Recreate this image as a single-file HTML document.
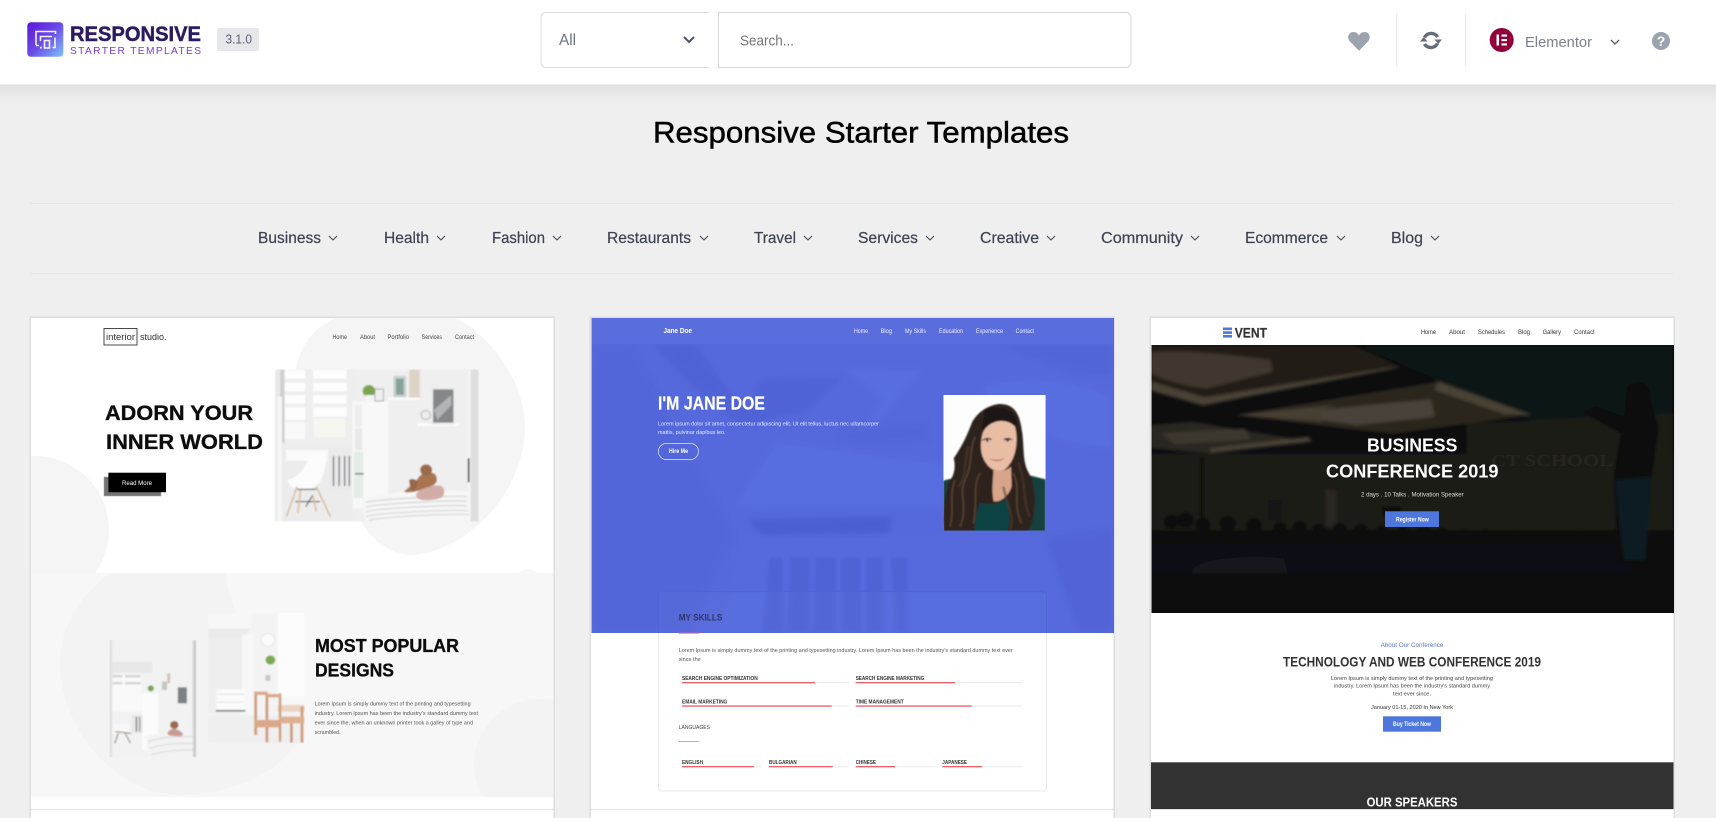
<!DOCTYPE html>
<html lang="en"><head><meta charset="utf-8"><title>Responsive Starter Templates</title>
<style>
html,body{margin:0;padding:0;width:1716px;height:818px;overflow:hidden;background:#efeff0}
svg{display:block;position:absolute;left:0;top:0}
text{font-family:"Liberation Sans",Arial,sans-serif}
.nav{font-size:16px;fill:#3c4350;stroke:#3c4350;stroke-width:.2}
.chev{fill:none;stroke:#454b57;stroke-width:1.1}
.b{font-weight:700}
</style></head><body>
<svg width="1716" height="818" viewBox="0 0 1716 818" xmlns="http://www.w3.org/2000/svg">
<defs>
<linearGradient id="lg" x1="0" y1="0" x2="1" y2="1"><stop offset="0" stop-color="#5d14d8"/><stop offset=".5" stop-color="#6a4be6"/><stop offset="1" stop-color="#7fc3f9"/></linearGradient>
<linearGradient id="sh" x1="0" y1="0" x2="0" y2="1"><stop offset="0" stop-color="#e2e2e3"/><stop offset="1" stop-color="#efeff0"/></linearGradient>
<filter id="bl" x="-2%" y="-2%" width="104%" height="104%"><feGaussianBlur stdDeviation=".3"/></filter>
<filter id="bl3" x="-5%" y="-5%" width="110%" height="110%"><feGaussianBlur stdDeviation="2.2"/></filter>
<filter id="bl4" x="-5%" y="-5%" width="110%" height="110%"><feGaussianBlur stdDeviation="5"/></filter>
<filter id="bl5" x="-5%" y="-5%" width="110%" height="110%"><feGaussianBlur stdDeviation="10"/></filter>
<clipPath id="c1a"><rect x="31" y="318" width="522.5" height="255"/></clipPath>
<clipPath id="c1b"><rect x="31" y="573" width="522.5" height="224"/></clipPath>
<clipPath id="c2"><rect x="591.5" y="318" width="522.5" height="315"/></clipPath>
<clipPath id="c3"><rect x="1151.5" y="345" width="522.5" height="268"/></clipPath>
<clipPath id="skw"><rect x="650" y="633" width="410" height="170"/></clipPath>
<clipPath id="ph"><rect x="25" y="15" width="307" height="407"/></clipPath>
<clipPath id="room"><rect x="727" y="178" width="581" height="457"/></clipPath>
<clipPath id="rl"><rect x="255" y="240" width="248" height="352"/></clipPath>
<clipPath id="rr"><rect x="535" y="158" width="277" height="392"/></clipPath>
</defs>

<rect width="1716" height="818" fill="#efeff0"/>
<rect y="85" width="1716" height="20" fill="url(#sh)"/>
<!-- header -->
<rect width="1716" height="85" fill="#fff"/>
<rect y="84.5" width="1716" height="1" fill="#dcdcde"/>
<rect x="27.3" y="22.3" width="36" height="34.5" rx="3.5" fill="url(#lg)"/>
<g fill="none" stroke="#fff" stroke-width="1.6" opacity=".92">
<path d="M36 45V31.5H55.5V34"/><path d="M36 45.5H39"/><path d="M40.5 41V36.5H52"/><path d="M55 37.5V47.5H52.5"/><rect x="44.5" y="40.5" width="5" height="7.5"/>
</g>
<rect x="40" y="46.8" width="1.7" height="1.7" fill="#fff"/>
<text x="70" y="40.8" font-size="21" class="b" fill="#2e1b5f" stroke="#2e1b5f" stroke-width=".45" textLength="131" lengthAdjust="spacingAndGlyphs">RESPONSIVE</text>
<text x="70" y="54" font-size="10.2" fill="#7a3bd0" textLength="131" lengthAdjust="spacing">STARTER TEMPLATES</text>
<rect x="217" y="28" width="42" height="23" rx="2" fill="#e5e7eb"/>
<text x="225.5" y="43.5" font-size="13" fill="#5b6270" textLength="26.5" lengthAdjust="spacingAndGlyphs">3.1.0</text>

<path d="M709 12.5H546a5 5 0 0 0-5 5V62.5a5 5 0 0 0 5 5H709" fill="#fff" stroke="#dcdcde" stroke-width="1"/>
<text x="559" y="45" font-size="16" fill="#6b7280" textLength="17" lengthAdjust="spacingAndGlyphs">All</text>
<path d="M684 37l5 5 5-5" fill="none" stroke="#4b5563" stroke-width="2"/>
<path d="M718.5 12.5H1126a5 5 0 0 1 5 5V62.5a5 5 0 0 1-5 5H718.5Z" fill="#fff" stroke="#d6d6d8" stroke-width="1"/>
<text x="740" y="45.5" font-size="15" fill="#757575" textLength="54" lengthAdjust="spacingAndGlyphs">Search...</text>

<path d="M1359 50.7L1350 41.5C1346.5 37.5 1348.5 32 1353.5 32C1356 32 1358 33.5 1359 35.5C1360 33.5 1362 32 1364.5 32C1369.5 32 1371.5 37.5 1368 41.5Z" fill="#9ca3af"/>
<rect x="1396" y="14" width="1" height="52" fill="#e5e7eb"/>
<g fill="none" stroke="#666c78" stroke-width="3.4"><path d="M1424.5 37.5A7.5 7.5 0 0 1 1437.5 37"/><path d="M1437.5 43.5A7.5 7.5 0 0 1 1424.5 44"/></g>
<path d="M1434.5 39.5H1442L1438.2 44ZM1420 41.5H1427.5L1423.8 37Z" fill="#666c78"/>
<rect x="1465" y="14" width="1" height="52" fill="#e5e7eb"/>
<circle cx="1501.7" cy="40" r="12" fill="#92003b"/>
<path d="M1496.5 34.5h2.5v11h-2.5zM1501.5 34.5h5.5v2.1h-5.5zM1501.5 39h5.5v2.1h-5.5zM1501.5 43.4h5.5v2.1h-5.5z" fill="#fff"/>
<text x="1525" y="47" font-size="15" fill="#7b818c" textLength="67" lengthAdjust="spacingAndGlyphs">Elementor</text>
<path d="M1611 40l4 4 4-4" fill="none" stroke="#555c68" stroke-width="1.3"/>
<circle cx="1661" cy="41" r="9" fill="#9ca3af"/>
<text x="1661" y="46" font-size="14" class="b" fill="#fff" text-anchor="middle">?</text>

<!-- title + category nav -->
<text x="653" y="142.7" font-size="29.5" fill="#000" stroke="#000" stroke-width=".5" textLength="416" lengthAdjust="spacingAndGlyphs">Responsive Starter Templates</text>
<rect x="30" y="203" width="1643" height="1" fill="#e5e5e7"/>
<rect x="30" y="273" width="1643" height="1" fill="#e5e5e7"/>
<text x="258" y="243" class="nav" textLength="63" lengthAdjust="spacingAndGlyphs">Business</text><path class="chev" d="M329 236l4 4 4-4"/>
<text x="384" y="243" class="nav" textLength="45" lengthAdjust="spacingAndGlyphs">Health</text><path class="chev" d="M437 236l4 4 4-4"/>
<text x="492" y="243" class="nav" textLength="53" lengthAdjust="spacingAndGlyphs">Fashion</text><path class="chev" d="M553 236l4 4 4-4"/>
<text x="607" y="243" class="nav" textLength="84" lengthAdjust="spacingAndGlyphs">Restaurants</text><path class="chev" d="M700 236l4 4 4-4"/>
<text x="754" y="243" class="nav" textLength="42" lengthAdjust="spacingAndGlyphs">Travel</text><path class="chev" d="M804 236l4 4 4-4"/>
<text x="858" y="243" class="nav" textLength="60" lengthAdjust="spacingAndGlyphs">Services</text><path class="chev" d="M926 236l4 4 4-4"/>
<text x="980" y="243" class="nav" textLength="59" lengthAdjust="spacingAndGlyphs">Creative</text><path class="chev" d="M1047 236l4 4 4-4"/>
<text x="1101" y="243" class="nav" textLength="82" lengthAdjust="spacingAndGlyphs">Community</text><path class="chev" d="M1191 236l4 4 4-4"/>
<text x="1245" y="243" class="nav" textLength="83" lengthAdjust="spacingAndGlyphs">Ecommerce</text><path class="chev" d="M1337 236l4 4 4-4"/>
<text x="1391" y="243" class="nav" textLength="32" lengthAdjust="spacingAndGlyphs">Blog</text><path class="chev" d="M1431 236l4 4 4-4"/>

<!-- card frames -->
<g fill="#fff" stroke="#dedee2" stroke-width="1.5">
<rect x="30.25" y="317.25" width="524" height="520"/>
<rect x="590.25" y="317.25" width="524" height="520"/>
<rect x="1150.25" y="317.25" width="524" height="520"/>
</g>

<!-- CARD 1 -->
<g filter="url(#bl)">
<g clip-path="url(#c1a)">
<path d="M335 318C300 335 285 370 300 430C320 480 350 510 362 523C375 545 395 555 413 555C470 550 525 490 525 427C525 380 490 335 455 318Z" fill="#f5f5f6"/>
<circle cx="35" cy="530" r="74" fill="#f5f5f6"/>
</g>
<rect x="31" y="573" width="522.5" height="224" fill="#f7f7f8"/>
<g clip-path="url(#c1b)">
<path d="M110 573C75 600 60 630 60 665C62 735 120 795 180 795C235 795 280 770 295 745L300 700L240 620C230 600 227 585 225 573Z" fill="#f3f3f4"/>
<circle cx="540" cy="765" r="66" fill="#f3f3f4"/>
</g>
<circle cx="528" cy="582" r="13" fill="#f7f7f8" clip-path="url(#c1a)"/>
<rect x="104" y="328.5" width="33" height="16.5" fill="none" stroke="#333" stroke-width=".9"/>
<text x="106" y="340" font-size="9" fill="#333" textLength="29" lengthAdjust="spacingAndGlyphs">interior</text>
<text x="140" y="340" font-size="9" fill="#333" textLength="26.5" lengthAdjust="spacingAndGlyphs">studio.</text>
<g font-size="6" fill="#444">
<text x="332.5" y="339" textLength="14.5" lengthAdjust="spacingAndGlyphs">Home</text>
<text x="360" y="339" textLength="15" lengthAdjust="spacingAndGlyphs">About</text>
<text x="387.5" y="339" textLength="21.5" lengthAdjust="spacingAndGlyphs">Portfolio</text>
<text x="421.5" y="339" textLength="20.5" lengthAdjust="spacingAndGlyphs">Services</text>
<text x="455" y="339" textLength="19" lengthAdjust="spacingAndGlyphs">Contact</text>
</g>
<text x="105" y="420" font-size="21" class="b" fill="#0a0a0a" stroke="#0a0a0a" stroke-width=".3" textLength="148" lengthAdjust="spacingAndGlyphs">ADORN YOUR</text>
<text x="106" y="449" font-size="21" class="b" fill="#0a0a0a" stroke="#0a0a0a" stroke-width=".3" textLength="157" lengthAdjust="spacingAndGlyphs">INNER WORLD</text>
<rect x="104" y="477" width="57" height="19" fill="#737373" stroke="#a8a8a8" stroke-width=".6"/>
<rect x="108.4" y="472.7" width="57.6" height="19.5" fill="#000"/>
<text x="122" y="485" font-size="6.5" fill="#fff" textLength="30" lengthAdjust="spacingAndGlyphs">Read More</text>

<!-- room image (zoom coords) -->
<g transform="translate(20 310) scale(.3507 .3333)">
<g clip-path="url(#room)"><g filter="url(#bl3)">
<rect x="727" y="178" width="581" height="457" fill="#f0f0f1"/>
<rect x="727" y="178" width="30" height="457" fill="#e9e9ea"/>
<rect x="742" y="178" width="12" height="220" fill="#cfcfd1"/>
<rect x="755" y="178" width="195" height="230" fill="#eeeeef"/>
<g fill="#fdfdfd"><rect x="755" y="180" width="58" height="26"/><rect x="755" y="218" width="58" height="26"/><rect x="755" y="255" width="58" height="26"/><rect x="755" y="292" width="58" height="38"/><rect x="836" y="180" width="95" height="26"/><rect x="836" y="218" width="95" height="26"/><rect x="836" y="255" width="95" height="26"/><rect x="836" y="292" width="95" height="28"/><rect x="838" y="326" width="90" height="56" fill="#f5f6f0"/><rect x="755" y="336" width="58" height="52" fill="#f9f9f9"/></g>
<rect x="950" y="178" width="330" height="457" fill="#efeff0"/>
<rect x="735" y="405" width="215" height="230" fill="#ececed"/>
<rect x="758" y="420" width="120" height="32" fill="#fafafa"/>
<rect x="733" y="260" width="14" height="375" fill="#f6f6f6"/>
<path d="M830 430h45c-5 50-10 90-45 105c-25 10-60 5-68-25c30-5 55-40 68-80Z" fill="#fcfcfc"/>
<g stroke="#333" stroke-width="3" fill="none"><path d="M790 538h55M785 575h70M815 590l20-35"/></g>
<g stroke="#dcc0a2" stroke-width="5" fill="none"><path d="M790 530l-30 90M845 530l40 90M800 540l-8 70M835 555l10 50"/></g>
<rect x="880" y="422" width="65" height="118" rx="4" fill="#eaeaeb"/>
<g fill="#78787a"><rect x="892" y="438" width="4" height="90"/><rect x="908" y="438" width="4" height="90"/><rect x="924" y="438" width="4" height="90"/><rect x="937" y="438" width="4" height="90"/></g>
<rect x="948" y="275" width="102" height="320" fill="#f8f8f8"/>
<rect x="955" y="285" width="20" height="65" fill="#ececec"/><rect x="955" y="355" width="20" height="65" fill="#e8e8e8"/><rect x="952" y="425" width="26" height="140" fill="#e3ece6"/>
<rect x="955" y="490" width="25" height="3" fill="#333"/>
<circle cx="995" cy="243" r="18" fill="#7ba551"/><rect x="985" y="255" width="22" height="18" fill="#f4f4f4"/>
<rect x="1012" y="237" width="24" height="36" fill="none" stroke="#888" stroke-width="2"/>
<rect x="1050" y="262" width="90" height="8" fill="#fcfcfc"/>
<rect x="1065" y="198" width="36" height="64" fill="#c8d0cc"/><rect x="1072" y="206" width="22" height="48" fill="#86a29c"/>
<rect x="1110" y="178" width="30" height="85" fill="#ded4c6"/>
<rect x="1132" y="340" width="120" height="8" fill="#fcfcfc"/>
<rect x="1172" y="232" width="68" height="112" fill="#ececec"/><rect x="1178" y="238" width="58" height="100" fill="#85888a"/>
<path d="M1180 300l50-45v30l-40 45Z" fill="#b4b4b4"/>
<circle cx="1157" cy="315" r="16" fill="#cfcfcf"/><circle cx="1157" cy="315" r="10" fill="#f0f0f0"/>
<rect x="1277" y="178" width="31" height="457" fill="#dedede"/><rect x="1277" y="178" width="8" height="457" fill="#f5f5f5"/>
<rect x="1277" y="445" width="5" height="72" fill="#444"/>
<path d="M975 570c60-25 200-35 305-25v90H985Z" fill="#f6f6f6"/>
<g stroke="#d8d8d8" stroke-width="4" fill="none"><path d="M985 578c30-12 260-22 290-18M985 592c30-12 260-22 290-18M985 606c30-12 260-22 290-18M988 620c30-12 260-22 290-18M995 632c30-12 250-22 285-18"/></g>
<path d="M1135 505c5-15 40-25 50-10c8 15 3 25-8 32l-40 15c-15 5-40 8-42 2l25-22Z" fill="#a8744f"/>
<path d="M1110 510c5-5 20-5 25 10l-10 22c-8 3-15-10-15-32Z" fill="#95674a"/>
<circle cx="1158" cy="480" r="17" fill="#9a6a48"/>
<path d="M1130 552c10-18 40-24 62-26c15 0 22 13 15 32c-6 10-40 14-60 12c-12-2-20-9-17-18Z" fill="#d2aca6"/>
</g></g></g>

<text x="315" y="652" font-size="18.5" class="b" fill="#0a0a0a" stroke="#0a0a0a" stroke-width=".3" textLength="144" lengthAdjust="spacingAndGlyphs">MOST POPULAR</text>
<text x="315" y="676.3" font-size="18.5" class="b" fill="#0a0a0a" stroke="#0a0a0a" stroke-width=".3" textLength="79" lengthAdjust="spacingAndGlyphs">DESIGNS</text>
<g font-size="5.6" fill="#555">
<text x="314.6" y="705.3" textLength="156" lengthAdjust="spacingAndGlyphs">Lorem Ipsum is simply dummy text of the printing and typesetting</text>
<text x="314.6" y="715" textLength="163.4" lengthAdjust="spacingAndGlyphs">industry. Lorem Ipsum has been the industry's standard dummy text</text>
<text x="314.6" y="724.4" textLength="158.4" lengthAdjust="spacingAndGlyphs">ever since the, when an unknown printer took a galley of type and</text>
<text x="314.6" y="734" textLength="26" lengthAdjust="spacingAndGlyphs">scrambled.</text>
</g>
<g transform="translate(20 560) scale(.3507 .3333)">
<g clip-path="url(#rl)"><g filter="url(#bl3)">
<rect x="255" y="240" width="248" height="352" fill="#f2f2f3"/>
<rect x="262" y="305" width="115" height="35" fill="#e8e8e9"/>
<rect x="262" y="340" width="85" height="115" fill="#f9f9f9"/>
<g fill="#d2d2d4"><rect x="264" y="345" width="28" height="7"/><rect x="264" y="366" width="28" height="7"/><rect x="300" y="345" width="44" height="7"/><rect x="300" y="366" width="44" height="7"/></g>
<rect x="348" y="400" width="46" height="170" fill="#fbfbfb"/>
<rect x="255" y="240" width="8" height="352" fill="#e0e0e1"/>
<rect x="493" y="240" width="10" height="352" fill="#cdcdce"/>
<rect x="318" y="465" width="32" height="55" fill="#e8e8e8"/><rect x="330" y="470" width="4" height="45" fill="#777"/><rect x="340" y="470" width="3" height="45" fill="#777"/>
<path d="M265 490h45v30h-45Z" fill="#f7f7f7"/><path d="M272 515l45 5M280 520l-10 30M300 520l15 30" stroke="#857565" stroke-width="3" fill="none"/>
<circle cx="373" cy="385" r="9" fill="#7ba551"/>
<rect x="405" y="365" width="14" height="25" fill="#bfc6c2"/><rect x="420" y="340" width="8" height="30" fill="#d0c2b2"/>
<rect x="450" y="382" width="26" height="48" fill="#7e8185"/>
<path d="M360 530c40-15 100-20 133-14v76H365Z" fill="#f3f3f3"/>
<g stroke="#d6d6d6" stroke-width="3" fill="none"><path d="M365 545c40-15 90-15 128-15M370 565c40-15 90-15 123-15M375 585c40-15 90-15 118-15"/></g>
<circle cx="440" cy="495" r="12" fill="#9a6a48"/><path d="M420 520c10-20 30-15 44 0c5 8-10 10-24 8c-10-1-20-2-20-8Z" fill="#c99b92"/>
</g></g>
<g clip-path="url(#rr)"><g filter="url(#bl3)">
<rect x="535" y="158" width="277" height="392" fill="#f3f3f4"/>
<rect x="535" y="158" width="125" height="48" fill="#f7f7f7"/>
<path d="M537 205H660L630 240H537Z" fill="#ebebec"/>
<rect x="537" y="235" width="95" height="225" fill="#eeeeef"/>
<rect x="632" y="225" width="35" height="240" fill="#f7f7f7"/>
<rect x="735" y="158" width="77" height="260" fill="#fcfcfc"/>
<rect x="535" y="465" width="277" height="85" fill="#efeff0"/>
<circle cx="707" cy="239" r="19" fill="#fbfbfb" stroke="#d4d4d4" stroke-width="1.5"/>
<rect x="692" y="308" width="44" height="22" fill="#f5f5f5"/><circle cx="714" cy="300" r="14" fill="#7cab4e"/>
<rect x="700" y="345" width="14" height="18" fill="#c8c8c8"/>
<rect x="560" y="388" width="82" height="68" fill="#fbfbfb"/><g fill="#d6d6d6"><rect x="562" y="402" width="78" height="2"/><rect x="562" y="425" width="78" height="2"/></g>
<rect x="558" y="450" width="85" height="5" fill="#777"/>
<rect x="738" y="410" width="74" height="30" fill="#f8f8f8"/>
<path d="M735 435h77v20h-77Z" fill="#ecd2c1"/>
<g fill="#d29a78"><rect x="668" y="395" width="8" height="130"/><rect x="700" y="400" width="8" height="147"/><rect x="738" y="400" width="7" height="145"/><rect x="770" y="470" width="8" height="78"/><rect x="800" y="440" width="8" height="108"/></g>
<path d="M668 395h38v10h-38ZM705 402h40v10h-40ZM670 480h70v22h-70Z" fill="#dba885"/>
<path d="M741 470h70v20h-70Z" fill="#dfb08f"/>
</g></g>
</g>
</g>

<!-- CARD 2 -->
<g filter="url(#bl)">
<g clip-path="url(#c2)">
<rect x="591" y="318" width="523" height="315" fill="#5569dc"/>
<g transform="translate(580 310) scale(.3507 .3333)">
<g filter="url(#bl5)" opacity=".6">
<path d="M160 102L450 680L300 970H30V102Z" fill="#5165d8"/>
<path d="M205 102H330L450 280L560 330L460 350L300 210Z" fill="#4c5fd1"/>
<path d="M510 210L750 200L640 310L470 330Z" fill="#4d60d1"/>
<path d="M750 170L980 180L820 370L750 440L860 270Z" fill="#5d71e2"/>
<path d="M560 395L1040 460V590H445L470 540Z" fill="#5c71e2"/>
<path d="M480 630L890 620L880 670L520 675Z" fill="#4557c8"/>
<path d="M470 680H1400L1500 970H390Z" fill="#586de0"/>
<path d="M1140 230C1250 190 1400 200 1520 260V420L1400 400C1300 370 1200 300 1140 230Z" fill="#5c71e2"/>
<path d="M1180 102H1520V200L1400 190L1300 150Z" fill="#5063d5"/>
<path d="M720 350L820 340L1000 330L1000 400L820 420L730 400Z" fill="#5265d7"/>
<path d="M1320 680L1520 650V970H1420Z" fill="#4f62d3"/>
</g>
<g filter="url(#bl4)" opacity=".6">
<path d="M540 740h40v228h-60ZM600 740h55v228h-65ZM670 740h60v228h-65ZM745 740h55v228h-55ZM815 740h50v228h-50ZM885 740h50v228h-35Z" fill="#4c5fd0"/>
</g>
</g>
<rect x="591" y="318" width="523" height="26" fill="#5a6ddd"/>
<rect x="659" y="592" width="387" height="41" fill="#fff" opacity=".025"/>
</g>
<text x="663.5" y="333" font-size="7" class="b" fill="#fff" textLength="28.5" lengthAdjust="spacingAndGlyphs">Jane Doe</text>
<g font-size="6" fill="#eef">
<text x="854" y="333" textLength="14" lengthAdjust="spacingAndGlyphs">Home</text>
<text x="880.6" y="333" textLength="11.4" lengthAdjust="spacingAndGlyphs">Blog</text>
<text x="905" y="333" textLength="21" lengthAdjust="spacingAndGlyphs">My Skills</text>
<text x="939" y="333" textLength="24" lengthAdjust="spacingAndGlyphs">Education</text>
<text x="976" y="333" textLength="27" lengthAdjust="spacingAndGlyphs">Experience</text>
<text x="1015.6" y="333" textLength="18.4" lengthAdjust="spacingAndGlyphs">Contact</text>
</g>
<text x="658" y="409.3" font-size="18" class="b" fill="#fff" stroke="#fff" stroke-width=".2" textLength="107" lengthAdjust="spacingAndGlyphs">I'M JANE DOE</text>
<g font-size="5.6" fill="#e8ebff">
<text x="658" y="425.3" textLength="221" lengthAdjust="spacingAndGlyphs">Lorem ipsum dolor sit amet, consectetur adipiscing elit. Ut elit tellus, luctus nec ullamcorper</text>
<text x="658" y="434" textLength="67.6" lengthAdjust="spacingAndGlyphs">mattis, pulvinar dapibus leo.</text>
</g>
<rect x="658.4" y="443.4" width="40" height="16.2" rx="8.1" fill="none" stroke="#e4e8ff" stroke-width=".7"/>
<text x="669" y="453.2" font-size="6" class="b" fill="#fff" textLength="19" lengthAdjust="spacingAndGlyphs">Hire Me</text>

<!-- photo (zoom coords) -->
<g transform="translate(935 390) scale(.33333)"><g clip-path="url(#ph)">
<rect x="25" y="15" width="307" height="407" fill="#fdfdfd"/>
<g filter="url(#bl3)">
<path d="M25 272L110 250L260 250L332 268V425H25Z" fill="#123f41"/>
<path d="M190 42C245 40 255 80 262 130C268 180 262 215 282 250C305 290 300 345 296 380C292 400 285 415 275 425H28C20 385 28 320 42 275C60 255 62 225 56 205C80 170 95 140 112 95C130 65 155 48 190 42Z" fill="#2e241e"/>
<path d="M150 58C190 45 235 55 245 90L245 120L140 120Z" fill="#1c1715"/>
<path d="M143 130C155 95 210 78 240 110C250 150 245 210 208 240C178 252 150 228 140 190C136 170 138 148 143 130Z" fill="#e9bda4"/>
<path d="M175 236C192 248 215 243 228 230L230 288C222 318 196 338 176 334C168 298 176 262 175 236Z" fill="#d7a589"/>
<path d="M135 338C152 345 192 345 216 326C226 378 226 400 216 425H118C118 392 126 362 135 338Z" fill="#0f4243"/>
<path d="M141 150c10-8 22-8 30-2l-3 2c-8-3-18-2-27 3ZM205 148c8-6 20-6 29 2l-27 0Z" fill="#3c2d25"/>
<ellipse cx="157" cy="153" rx="10" ry="3.5" fill="#cdbfb5"/><ellipse cx="218" cy="153" rx="10" ry="3.5" fill="#cdbfb5"/>
<circle cx="157" cy="152" r="3.5" fill="#3a2a20"/><circle cx="218" cy="152" r="3.5" fill="#3a2a20"/>
<path d="M162 205c15 6 35 6 48-1c-12 12-36 12-48 1Z" fill="#c2605c"/>
<g fill="none" stroke="#7f6242" stroke-width="4" opacity=".55"><path d="M120 140C100 190 115 220 90 270C70 310 100 350 75 410"/><path d="M135 250C110 290 130 330 115 400"/><path d="M60 270C40 320 60 360 45 410"/><path d="M235 250C260 300 230 340 260 400"/></g>
<g fill="none" stroke="#4f3d2c" stroke-width="7" opacity=".6"><path d="M100 170C85 220 100 250 70 290"/><path d="M250 220C275 280 262 340 285 380"/><path d="M205 290C215 340 240 380 225 420"/></g>
</g>
</g></g>

<!-- skills -->
<rect x="658.5" y="591.7" width="388" height="199.3" rx="3.5" fill="none" stroke="#e8e8ea" stroke-width="1" clip-path="url(#skw)"/>
<rect x="658.5" y="591.7" width="388" height="60" rx="3.5" fill="none" stroke="#5064d4" stroke-width=".8" clip-path="url(#c2)"/>
<text x="678.7" y="620.5" font-size="9" class="b" fill="#2e3668" textLength="43.6" lengthAdjust="spacingAndGlyphs">MY SKILLS</text>
<rect x="678.7" y="632.6" width="20.6" height="1" fill="#d9648e"/>
<g font-size="5.6" fill="#555">
<text x="678.7" y="652" textLength="334" lengthAdjust="spacingAndGlyphs">Lorem Ipsum is simply dummy text of the printing and typesetting industry. Lorem Ipsum has been the industry's standard dummy text ever</text>
<text x="678.7" y="661" textLength="22" lengthAdjust="spacingAndGlyphs">since the</text>
</g>
<g font-size="5.5" fill="#333" font-weight="700">
<text x="682" y="680" textLength="75.7" lengthAdjust="spacingAndGlyphs">SEARCH ENGINE OPTIMIZATION</text>
<text x="855.7" y="680" textLength="68.6" lengthAdjust="spacingAndGlyphs">SEARCH ENGINE MARKETING</text>
<text x="682" y="703.5" textLength="45.3" lengthAdjust="spacingAndGlyphs">EMAIL MARKETING</text>
<text x="855.7" y="703.5" textLength="48" lengthAdjust="spacingAndGlyphs">TIME MANAGEMENT</text>
<text x="682" y="764" textLength="21" lengthAdjust="spacingAndGlyphs">ENGLISH</text>
<text x="769" y="764" textLength="27.7" lengthAdjust="spacingAndGlyphs">BULGARIAN</text>
<text x="855.7" y="764" textLength="20.3" lengthAdjust="spacingAndGlyphs">CHINESE</text>
<text x="942.3" y="764" textLength="24.7" lengthAdjust="spacingAndGlyphs">JAPANESE</text>
</g>
<text x="678.7" y="729" font-size="5.8" fill="#444" textLength="31.3" lengthAdjust="spacingAndGlyphs">LANGUAGES</text>
<rect x="678.7" y="741" width="20.6" height=".8" fill="#ee7a80"/>
<g fill="#ececee">
<rect x="682" y="682" width="167" height="1.2"/><rect x="855.7" y="682" width="166" height="1.2"/>
<rect x="682" y="705.4" width="167" height="1.2"/><rect x="855.7" y="705.4" width="166" height="1.2"/>
<rect x="682" y="766" width="79.7" height="1.2"/><rect x="769" y="766" width="79.7" height="1.2"/><rect x="855.7" y="766" width="79.6" height="1.2"/><rect x="942.3" y="766" width="79.7" height="1.2"/>
</g>
<g fill="#ee5f66">
<rect x="682" y="682" width="133" height="1.3"/><rect x="855.7" y="682" width="99.3" height="1.3"/>
<rect x="682" y="705.4" width="149.7" height="1.3"/><rect x="855.7" y="705.4" width="116" height="1.3"/>
<rect x="682" y="766" width="72" height="1.3"/><rect x="769" y="766" width="63.7" height="1.3"/><rect x="855.7" y="766" width="39.3" height="1.3"/><rect x="942.3" y="766" width="39.7" height="1.3"/>
</g>
</g>

<!-- CARD 3 -->
<g filter="url(#bl)">
<g clip-path="url(#c3)">
<rect x="1151" y="345" width="523" height="268" fill="#0c0c0e"/>
<g transform="translate(1140 310) scale(.3507 .3333)">
<g filter="url(#bl4)">
<rect x="31" y="430" width="1490" height="240" fill="#1f1c17"/>
<rect x="170" y="440" width="12" height="200" fill="#100f0c"/>
<path d="M1000 105H1520V330H1115L850 215L620 105Z" fill="#0f1316"/>
<path d="M930 340L1520 310V640H930Z" fill="#1b1a15"/>
<path d="M31 105H610L745 172L300 262L180 290L31 245Z" fill="#221f19"/>
<path d="M31 240L180 285L745 172L700 175L185 262L31 215Z" fill="#4a4234"/>
<path d="M31 128C130 118 260 135 372 150L378 185L190 235C130 228 80 215 31 190Z" fill="#3f392e"/>
<path d="M270 315L850 215L1115 315L720 372L500 345Z" fill="#2c281f"/>
<path d="M270 315L560 285L515 300L520 335Z" fill="#463f33"/>
<path d="M1115 315L850 215L840 240L1040 312Z" fill="#4a4336"/>
<path d="M515 300L830 268L840 320L620 345L520 330Z" fill="#48423a"/>
<path d="M31 345L150 335L490 395L200 430L31 415Z" fill="#2c2820"/>
<path d="M60 370L300 355L315 388L100 402Z" fill="#3e392f"/>
<path d="M200 428L490 395L480 380L200 415Z" fill="#4a4336"/>
<rect x="530" y="540" width="30" height="110" fill="#2a2823"/>
<rect x="365" y="570" width="40" height="60" fill="#171512"/>
<rect x="690" y="590" width="55" height="30" fill="#0b0b0c"/>
<path d="M31 660h1490v330H31Z" fill="#0c0d10"/>
<path d="M31 700H1400V790H31Z" fill="#0c0f15"/>
<g fill="#0f0f11">
<circle cx="90" cy="635" r="22"/><circle cx="130" cy="630" r="24"/><circle cx="180" cy="645" r="22"/><circle cx="250" cy="640" r="24"/><circle cx="325" cy="645" r="22"/><circle cx="400" cy="655" r="20"/><circle cx="455" cy="655" r="22"/><circle cx="510" cy="660" r="20"/><circle cx="570" cy="660" r="22"/><circle cx="630" cy="660" r="20"/><circle cx="690" cy="665" r="20"/><circle cx="750" cy="668" r="20"/><circle cx="810" cy="668" r="20"/><circle cx="860" cy="672" r="20"/><circle cx="925" cy="675" r="18"/><circle cx="985" cy="675" r="18"/><circle cx="1075" cy="675" r="16"/><circle cx="1140" cy="685" r="14"/><circle cx="1180" cy="685" r="13"/><circle cx="1260" cy="672" r="14"/>
</g>
<path d="M1390 230C1420 200 1460 220 1455 270L1480 350L1460 500L1440 760H1360L1350 500L1370 370L1300 330L1260 305L1300 290L1380 320Z" fill="#0c0f11"/>
<path d="M1355 510L1460 500L1440 750H1380Z" fill="#101b22"/>
<path d="M150 780C170 745 300 735 410 745L420 790H150Z" fill="#18181a"/>
</g>
</g>
<text x="1491" y="466" font-size="17" fill="#28251f" font-weight="700" textLength="122" lengthAdjust="spacingAndGlyphs" style="font-family:'Liberation Serif',serif" clip-path="url(#c3)">CT SCHOOL</text>
</g>
<g font-size="14" fill="#333" font-weight="700">
<rect x="1223" y="327.5" width="9" height="2.6" fill="#4d77dc"/><rect x="1223" y="331.3" width="9" height="2.6" fill="#4d77dc"/><rect x="1223" y="335" width="9" height="2.6" fill="#4d77dc"/>
<text x="1234.7" y="337.5" stroke="#333" stroke-width=".2" textLength="32.3" lengthAdjust="spacingAndGlyphs">VENT</text>
</g>
<g font-size="6" fill="#333">
<text x="1421" y="334" textLength="15" lengthAdjust="spacingAndGlyphs">Home</text>
<text x="1449" y="334" textLength="16" lengthAdjust="spacingAndGlyphs">About</text>
<text x="1478" y="334" textLength="27" lengthAdjust="spacingAndGlyphs">Schedules</text>
<text x="1518" y="334" textLength="12" lengthAdjust="spacingAndGlyphs">Blog</text>
<text x="1542.7" y="334" textLength="18.3" lengthAdjust="spacingAndGlyphs">Gallery</text>
<text x="1574" y="334" textLength="20.6" lengthAdjust="spacingAndGlyphs">Contact</text>
</g>
<g fill="#fff" font-size="18.5" font-weight="700">
<text x="1367" y="451.7" textLength="90.4" lengthAdjust="spacingAndGlyphs">BUSINESS</text>
<text x="1326" y="477.7" textLength="172.5" lengthAdjust="spacingAndGlyphs">CONFERENCE 2019</text>
</g>
<text x="1361" y="496.5" font-size="6.5" fill="#ddd" textLength="102.7" lengthAdjust="spacingAndGlyphs">2 days . 10 Talks . Motivation Speaker</text>
<rect x="1385" y="511.3" width="54" height="15.7" fill="#4d77dc"/>
<text x="1396" y="521.5" font-size="6" class="b" fill="#fff" textLength="32.7" lengthAdjust="spacingAndGlyphs">Register Now</text>
<text x="1380.6" y="647" font-size="6" fill="#5a78c8" textLength="62.8" lengthAdjust="spacingAndGlyphs">About Our Conference</text>
<text x="1283" y="666.3" font-size="13.5" class="b" fill="#333" textLength="258" lengthAdjust="spacingAndGlyphs">TECHNOLOGY AND WEB CONFERENCE 2019</text>
<g font-size="5.6" fill="#444">
<text x="1330.8" y="680" textLength="162.2" lengthAdjust="spacingAndGlyphs">Lorem Ipsum is simply dummy text of the printing and typesetting</text>
<text x="1334" y="687.7" textLength="156" lengthAdjust="spacingAndGlyphs">industry. Lorem Ipsum has been the industry's standard dummy</text>
<text x="1393" y="695.3" textLength="38" lengthAdjust="spacingAndGlyphs">text ever since.</text>
<text x="1371" y="708.8" textLength="82" lengthAdjust="spacingAndGlyphs" fill="#333">January 01-15, 2020 In New York</text>
</g>
<rect x="1383" y="716.3" width="58" height="15.4" fill="#4d77dc"/>
<text x="1393" y="726" font-size="6" class="b" fill="#fff" textLength="38" lengthAdjust="spacingAndGlyphs">Buy Ticket Now</text>
<rect x="1151" y="762.3" width="522.5" height="46.7" fill="#333"/>
<text x="1366.6" y="806.7" font-size="12.5" class="b" fill="#fff" textLength="90.8" lengthAdjust="spacingAndGlyphs">OUR SPEAKERS</text>
</g>

<!-- preview bottom rules -->
<rect x="31" y="809" width="522.5" height="1" fill="#e4e4e6"/>
<rect x="591" y="809" width="522.5" height="1" fill="#e4e4e6"/>
<rect x="1151" y="809" width="522.5" height="1" fill="#e4e4e6"/>
</svg>
</body></html>
